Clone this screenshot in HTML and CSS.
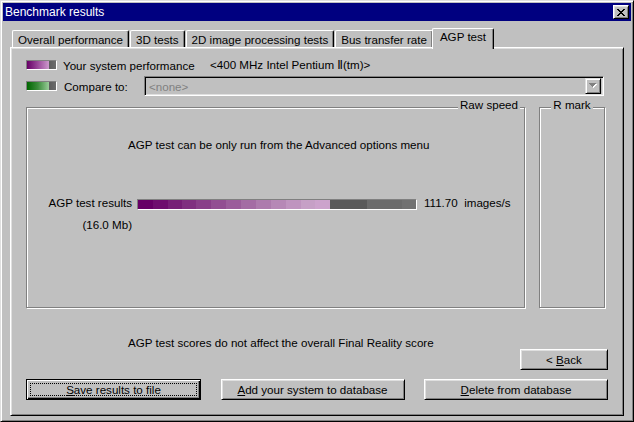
FILE: index.html
```html
<!DOCTYPE html>
<html>
<head>
<meta charset="utf-8">
<title>Benchmark results</title>
<link rel="stylesheet" href="styles.css">
</head>
<body>
<div class="window">
  <div class="titlebar">
    <span class="title">Benchmark results</span>
    <span class="close-btn"><svg width="8" height="7" viewBox="0 0 8 7" shape-rendering="crispEdges"><path d="M0 0h2v1h1v1h2v-1h1v-1h2v1h-1v1h-1v1h-1v1h1v1h1v1h1v1h-2v-1h-1v-1h-2v1h-1v1h-2v-1h1v-1h1v-1h1v-1h-1v-1h-1v-1h-1z" fill="#000"/></svg></span>
  </div>
  <div class="body">
    <div class="tabs">
      <div class="tab">Overall performance</div>
      <div class="tab">3D tests</div>
      <div class="tab">2D image processing tests</div>
      <div class="tab">Bus transfer rate</div>
      <div class="tab active">AGP test</div>
    </div>
    <div class="panel">
      <div class="legend-row">
        <span class="swatch swatch-purple"></span>
        <span class="legend-label legend-label-wide">Your system performance</span>
        <span class="legend-value">&lt;400 MHz Intel Pentium Ⅱ(tm)&gt;</span>
      </div>
      <div class="legend-row legend-row-combo">
        <span class="swatch swatch-green"></span>
        <span class="legend-label legend-label-narrow">Compare to:</span>
        <div class="combo">
          <span class="combo-text">&lt;none&gt;</span>
          <span class="combo-btn"><svg width="9" height="6" viewBox="0 0 9 6" shape-rendering="crispEdges"><path d="M1 1h7v1h-1v1h-1v1h-1v1h-1v-1h-1v-1h-1v-1h-1z" fill="#fff"/><path d="M0 0h7v1h-1v1h-1v1h-1v1h-1v-1h-1v-1h-1v-1h-1z" fill="#808080"/></svg></span>
        </div>
      </div>
      <div class="groups">
        <div class="group group-raw">
          <div class="group-label group-label-right">Raw speed</div>
          <div class="group-msg">AGP test can be only run from the Advanced options menu</div>
          <div class="result-grid">
            <span class="result-label">AGP test results</span>
            <div class="bar"><div class="bar-fill"></div></div>
            <span class="result-value">111.70&nbsp; images/s</span>
            <span class="result-label">(16.0 Mb)</span>
          </div>
        </div>
        <div class="group group-rmark">
          <div class="group-label group-label-center">R mark</div>
        </div>
      </div>
      <div class="note">AGP test scores do not affect the overall Final Reality score</div>
      <div class="back-row">
        <div class="btn btn-back"><span>&lt;&nbsp;<u>B</u>ack</span></div>
      </div>
      <div class="button-row">
        <div class="btn btn-default btn-save"><span class="focus"><span><u>S</u>ave results to file</span></span></div>
        <div class="btn btn-add"><span><u>A</u>dd your system to database</span></div>
        <div class="btn btn-delete"><span><u>D</u>elete from database</span></div>
      </div>
    </div>
  </div>
</div>
</body>
</html>
```

FILE: styles.css
```css
* { box-sizing: border-box; }
html, body { margin: 0; padding: 0; }
body {
  width: 634px;
  height: 422px;
  overflow: hidden;
  background: #c0c0c0;
  font-family: "Liberation Sans", Arial, "DejaVu Sans", "Noto Sans CJK JP", sans-serif;
  font-size: 11.6px;
  color: #000;
}
.window {
  width: 634px;
  height: 422px;
  border: 1px solid;
  border-color: #dfdfdf #000 #000 #dfdfdf;
  box-shadow: inset 1px 1px #fff, inset -1px -1px #808080;
  padding: 2px;
  display: flex;
  flex-direction: column;
  background: #c0c0c0;
}
.titlebar {
  height: 18px;
  background: #000080;
  display: flex;
  align-items: center;
  justify-content: space-between;
  padding: 0 2px 0 2px;
  flex: none;
}
.title { color: #fff; line-height: 14px; font-size: 12px; }
.close-btn {
  width: 16px;
  height: 14px;
  background: #c0c0c0;
  border: 1px solid;
  border-color: #fff #000 #000 #fff;
  box-shadow: inset 1px 1px #dfdfdf, inset -1px -1px #808080;
  display: flex;
  align-items: center;
  justify-content: center;
}
.close-btn svg { display: block; }

.body {
  flex: 1;
  padding: 7px 7px 3px 7px;
  display: flex;
  flex-direction: column;
}
.tabs {
  height: 19px;
  display: flex;
  align-items: flex-end;
  padding-left: 2px;
  flex: none;
}
.tab {
  height: 17px;
  padding: 1px 5px 0 5px;
  line-height: 15px;
  white-space: nowrap;
  border-top: 1px solid #fff;
  border-left: 1px solid #fff;
  border-right: 1px solid #000;
  border-radius: 2px 2px 0 0;
  box-shadow: inset -1px 0 #808080;
  background: #c0c0c0;
  margin-right: 1px;
}
.tab.active {
  height: 21px;
  line-height: 14px;
  padding: 1px 7px 0 7px;
  margin-left: -2px;
  margin-bottom: -2px;
  position: relative;
  z-index: 1;
}

.panel {
  flex: 1;
  border: 1px solid;
  border-color: #fff #000 #000 #fff;
  box-shadow: inset 1px 1px #dfdfdf, inset -1px -1px #808080;
  padding: 9px 15px 15px 15px;
  display: flex;
  flex-direction: column;
}
.legend-row {
  height: 16px;
  display: flex;
  align-items: center;
  white-space: nowrap;
}
.legend-row-combo {
  height: 20px;
  margin-top: 3px;
}
.swatch {
  width: 31px;
  height: 10px;
  border: 1px solid;
  border-color: #808080 #fff #fff #808080;
  flex: none;
}
.swatch-purple {
  background: linear-gradient(to right, #660066, #9a4a9a 11px, #cc99cc 22px, #5c5c5c 22px, #6c6c6c 29px);
}
.swatch-green {
  background: linear-gradient(to right, #006600, #3c8c3c 11px, #99cc99 22px, #5c5c5c 22px, #6c6c6c 29px);
}
.legend-label { margin-left: 6px; flex: none; }
.legend-label-wide { width: 147px; }
.legend-label-narrow { width: 80px; margin-left: 7px; }
.combo {
  width: 460px;
  height: 20px;
  border: 1px solid;
  border-color: #808080 #fff #fff #808080;
  box-shadow: inset 1px 1px #000, inset -1px -1px #dfdfdf;
  display: flex;
  align-items: center;
  justify-content: space-between;
  padding: 2px;
}
.combo-text { color: #808080; padding-left: 2px; }
.combo-btn {
  width: 16px;
  height: 16px;
  border: 1px solid;
  border-color: #dfdfdf #000 #000 #dfdfdf;
  box-shadow: inset 1px 1px #fff, inset -1px -1px #808080;
  display: flex;
  align-items: center;
  justify-content: center;
}
.combo-btn svg { display: block; margin-left: 1px; }

.groups {
  display: flex;
  gap: 14px;
  margin-top: 11px;
  flex: none;
}
.group {
  height: 201px;
  border: 1px solid #808080;
  box-shadow: 1px 1px 0 #fff, inset 1px 1px 0 #fff;
}
.group-raw { width: 499px; }
.group-rmark { width: 66px; }
.group-label {
  display: table;
  line-height: 14px;
  padding: 0 2px;
  background: #c0c0c0;
  margin-top: -10px;
}
.group-label-right { margin-left: auto; margin-right: 4px; }
.group-label-center { margin-left: auto; margin-right: auto; }
.group-msg {
  line-height: 14px;
  margin-top: 26px;
  padding-left: 101px;
  white-space: nowrap;
}
.result-grid {
  display: grid;
  grid-template-columns: 92px 280px auto;
  column-gap: 5px;
  row-gap: 8px;
  margin-top: 44px;
  margin-left: 13px;
  line-height: 14px;
  align-items: start;
}
.result-label { text-align: right; white-space: nowrap; }
.result-value { margin-left: 2px; white-space: nowrap; }
.bar {
  margin-top: 3px;
  height: 11px;
  border: 1px solid;
  border-color: #808080 #fff #fff #808080;
}
.bar-fill {
  height: 9px;
  background: linear-gradient(to right,
    #660066 0 15px, #6e0e6e 15px 30px, #772077 30px 44px, #803080 44px 58px,
    #893f89 58px 73px, #924e92 73px 88px, #9b5d9b 88px 103px, #a46ca4 103px 118px,
    #ad7bad 118px 133px, #b688b6 133px 148px, #bf94bf 148px 163px, #c6a0c6 163px 177px,
    #cca3cc 177px 192px, #5a5a5a 192px 229px, #6c6c6c 229px 264px, #727272 264px 278px);
}

.note {
  line-height: 13px;
  margin-top: 28px;
  margin-left: 102px;
  white-space: nowrap;
}
.back-row {
  display: flex;
  justify-content: flex-end;
}
.btn {
  height: 21px;
  border: 1px solid;
  border-color: #fff #000 #000 #fff;
  box-shadow: inset 1px 1px #dfdfdf, inset -1px -1px #808080;
  display: flex;
  align-items: center;
  justify-content: center;
  white-space: nowrap;
  line-height: 14px;
}
.btn-back { width: 88px; }
.button-row {
  display: flex;
  justify-content: space-between;
  margin-top: 9px;
}
.btn-save { width: 175px; }
.btn-add { width: 184px; }
.btn-delete { width: 184px; }
.btn-default {
  border-color: #000;
  box-shadow: inset 1px 1px #fff, inset -1px -1px #000, inset -2px -2px #808080;
  padding: 3px;
}
.focus {
  flex: 1;
  align-self: stretch;
  border: 1px dotted #000;
  display: flex;
  align-items: center;
  justify-content: center;
}
```
